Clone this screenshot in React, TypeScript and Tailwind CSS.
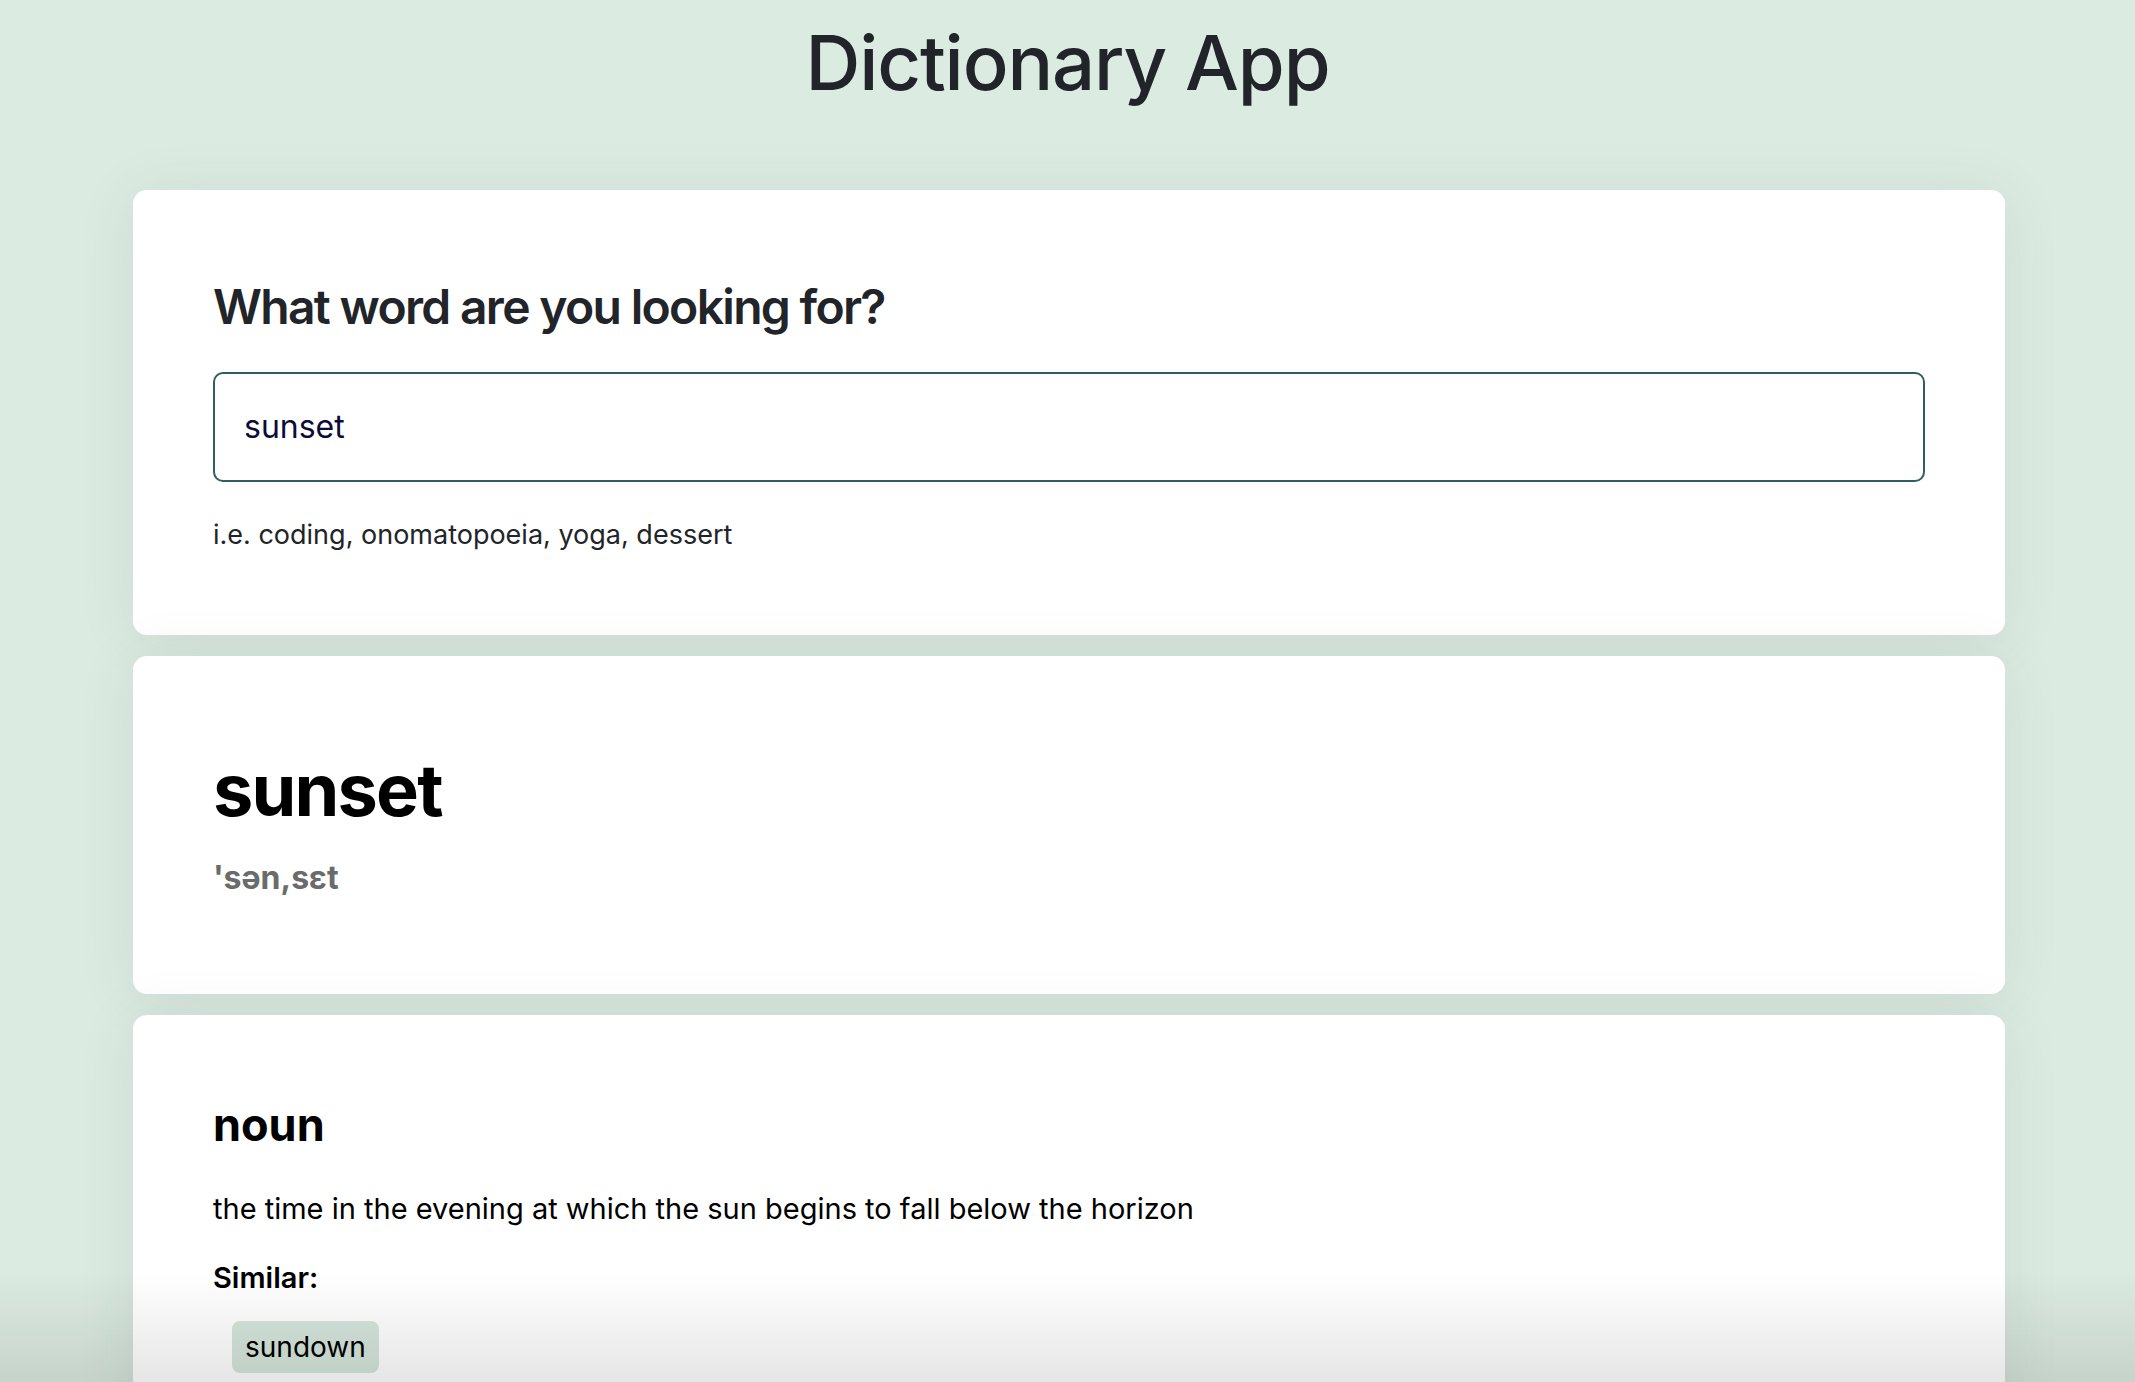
import { useState } from 'react';

const SIMILAR = ['sundown'];

export default function App() {
  const [word, setWord] = useState('sunset');

  return (
    <div className="min-h-screen bg-[#dcebe2] font-['Inter',sans-serif] text-[#212529]">
      <header className="pt-[17px] text-center">
        <h1 className="text-[76px] font-medium leading-[1.2] tracking-[-0.015em]">Dictionary App</h1>
      </header>

      <main className="ml-[133px] mt-[82px] flex w-[1872px] flex-col gap-[21px] pb-[60px]">
        <section className="rounded-[14px] bg-white px-[80px] pt-[88px] pb-[80px] shadow-[0_4px_60px_rgba(40,70,60,0.09)]">
          <h2 className="mb-[36px] text-[48px] font-semibold leading-[1.2] tracking-[-0.035em]">
            What word are you looking for?
          </h2>
          <input
            type="search"
            value={word}
            onChange={(e) => setWord(e.target.value)}
            className="block h-[110px] w-full rounded-[10px] border-2 border-[#2f5d62] px-[29px] text-[32px] text-[#0d0b3a] outline-none"
          />
          <p className="mt-[33px] text-[27px] leading-[1.5]">i.e. coding, onomatopoeia, yoga, dessert</p>
        </section>

        <section className="rounded-[14px] bg-white px-[80px] pt-[91px] pb-[92px] shadow-[0_4px_60px_rgba(40,70,60,0.09)]">
          <h2 className="text-[72px] font-bold leading-[1.2] tracking-tight text-black">sunset</h2>
          <div className="mt-[20px] text-[32px] font-bold leading-[1.5] text-[#6b6b6b]">'sən,sɛt</div>
        </section>

        <section className="rounded-[14px] bg-white px-[80px] pt-[83px] pb-[80px] text-black shadow-[0_4px_60px_rgba(40,70,60,0.09)]">
          <h3 className="text-[45px] font-bold leading-[1.2]">noun</h3>
          <p className="mt-[35px] text-[29px] leading-[1.5]">
            the time in the evening at which the sun begins to fall below the horizon
          </p>
          <div className="mt-[26px] text-[29px] font-semibold leading-[1.5]">Similar:</div>
          <ul className="mt-[21px] flex flex-wrap gap-3 pl-[19px]">
            {SIMILAR.map((s) => (
              <li key={s} className="rounded-[8px] bg-[#d6e6dc] px-[13px] py-[5px] text-[28px] leading-[1.5]">
                {s}
              </li>
            ))}
          </ul>
        </section>
      </main>

      <div className="pointer-events-none fixed inset-x-0 bottom-0 h-[110px] bg-gradient-to-b from-transparent to-black/10" />
    </div>
  );
}
